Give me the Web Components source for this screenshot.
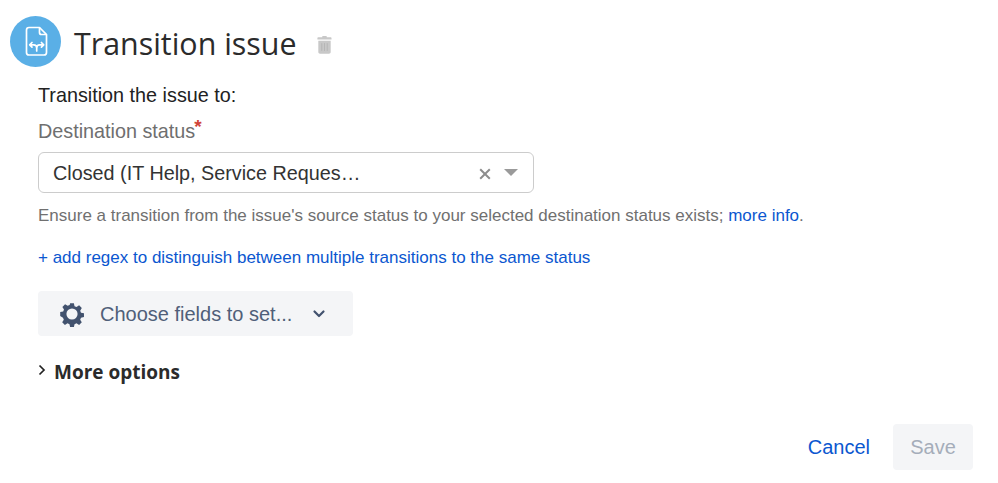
<!DOCTYPE html>
<html>
<head>
<meta charset="utf-8">
<title>Transition issue</title>
<style>
  html, body { margin: 0; background: #fff; }
  body { font-family: "Liberation Sans", Arial, sans-serif; color: #172b4d; }
</style>
</head>
<body>
<transition-form></transition-form>

<template id="header-tpl">
  <style>
    :host { display: flex; align-items: center; height: 52px; }
    .avatar { width: 51px; height: 51px; flex-shrink: 0; align-self: flex-start; }
    h1 { margin: 3px 0 0 13px; font: 400 30.4px/44px "Open Sans", sans-serif; color: #2b2b2b; }
    .trash { margin: 5px 0 0 19px; width: 17px; height: 20px; }
  </style>
  <svg class="avatar" viewBox="0 0 51 51">
    <circle cx="25.5" cy="25.5" r="25.5" fill="#5aafe6"/>
    <path d="M19 11.500h10.500l7 7v18a2.500 2.500 0 0 1-2.500 2.500H19a2.500 2.500 0 0 1-2.500-2.500V14a2.500 2.500 0 0 1 2.500-2.500z" fill="none" stroke="#fff" stroke-width="1.7" stroke-linejoin="round"/>
    <path d="M29.500 11.500v5a2 2 0 0 0 2 2h5" fill="none" stroke="#fff" stroke-width="1.700"/>
    <path d="M26.700 35v-3c0-2-1.300-3.200-3-3.200h-3.600M26.700 32c0-2 1.300-3.200 3-3.200h3.600M22 26.500l-2.300 2.300 2.300 2.300M31.400 26.500l2.300 2.300-2.300 2.300" fill="none" stroke="#fff" stroke-width="1.700" stroke-linecap="round" stroke-linejoin="round"/>
  </svg>
  <h1><slot></slot></h1>
  <svg class="trash" viewBox="0 0 18 22">
    <path d="M6.5 2.5V1.6c0-.4.3-.6.6-.6h3.8c.3 0 .6.2.6.6v.9h4.3c.5 0 .9.4.9.9V5H1.2V3.4c0-.5.4-.9.9-.9z" fill="#c8c8c8"/>
    <path d="M2.2 6.2h13.6v12.4c0 1-.8 1.9-1.9 1.9H4.1c-1 0-1.9-.9-1.9-1.9z" fill="#c8c8c8"/>
    <path d="M6 9v8.5M9 9v8.5M12 9v8.5" stroke="#b4b4b4" stroke-width="1"/>
  </svg>
</template>

<template id="select-tpl">
  <style>
    :host { display: block; width: 496px; box-sizing: border-box; height: 41px; border: 1px solid #ccc; border-radius: 6px; background: #fff; }
    .row { display: flex; align-items: center; height: 100%; padding: 0 15px 0 14px; box-sizing: border-box; font-size: 19.8px; color: #333; }
    .value { flex: 1; min-width: 0; margin-top: 1px; }
    svg { display: block; }
    .clear { width: 12px; height: 12px; margin-top: 3px; }
    .caret { width: 14px; height: 7px; margin-left: 13px; margin-top: -1px; }
  </style>
  <div class="row">
    <span class="value"><slot></slot></span>
    <svg class="clear" viewBox="0 0 12 12"><path d="M1.2 1.2l9.6 9.6M10.8 1.2l-9.6 9.6" stroke="#8d8d8d" stroke-width="2"/></svg>
    <svg class="caret" viewBox="0 0 14 7"><path d="M0 0h14L7 7z" fill="#9a9a9a"/></svg>
  </div>
</template>

<template id="fields-tpl">
  <style>
    :host { display: inline-flex; align-items: center; width: 315px; height: 45px; box-sizing: border-box; padding-left: 21px; background: #f4f5f7; border-radius: 4px; font-size: 20px; color: #505f79; }
    .gear { width: 26px; height: 26px; }
    .label { margin: 1px 0 0 15px; }
    .chev { width: 14px; height: 9px; margin-left: 20px; }
  </style>
  <svg class="gear" viewBox="0 0 26 26">
    <path fill="#42526e" fill-rule="evenodd" d="M10.9 1h4.2l.7 3.3 2.2.9 2.9-1.8 3 3-1.8 2.9.9 2.2 3.3.7v4.2l-3.3.7-.9 2.2 1.8 2.9-3 3-2.9-1.8-2.2.9-.7 3.3h-4.2l-.7-3.3-2.2-.9-2.9 1.8-3-3 1.8-2.9-.9-2.2L-.1 15.1v-4.2l3.3-.7.9-2.2-1.8-2.9 3-3 2.9 1.8 2.2-.9zM13 6.8a6.2 6.2 0 1 0 0 12.4 6.2 6.2 0 0 0 0-12.4z" transform="translate(1.3 1.3) scale(.9)"/>
  </svg>
  <span class="label"><slot></slot></span>
  <svg class="chev" viewBox="0 0 14 9"><path d="M2.500 2.500l4.500 4.500 4.500-4.500" fill="none" stroke="#42526e" stroke-width="2.200" stroke-linecap="round" stroke-linejoin="round"/></svg>
</template>

<template id="more-tpl">
  <style>
    :host { display: flex; align-items: center; font: 700 19px/28px "Open Sans", sans-serif; color: #2b2b2b; }
    svg { width: 8px; height: 12px; margin-right: 8px; margin-top: -4px; }
  </style>
  <svg viewBox="0 0 8 12"><path d="M1.5 1.500L6 6l-4.500 4.500" fill="none" stroke="#222" stroke-width="1.7"/></svg>
  <slot></slot>
</template>

<template id="footer-tpl">
  <style>
    :host { display: flex; justify-content: flex-end; align-items: center; gap: 23px; }
    .cancel { font-size: 20px; color: #0b57d0; }
    .save { display: flex; align-items: center; justify-content: center; width: 80px; height: 46px; background: #f4f5f7; border-radius: 4px; font-size: 20px; color: #a5adba; }
  </style>
  <span class="cancel">Cancel</span>
  <span class="save">Save</span>
</template>

<template id="form-tpl">
  <style>
    :host { display: block; width: 998px; height: 483px; box-sizing: border-box; padding: 16px 25px 0 10px; }
    .body { margin-left: 28px; }
    a { color: #0b57d0; text-decoration: none; }
    .intro { margin-top: 15px; font-size: 19.8px; line-height: 24px; color: #222; }
    .label { margin-top: 12px; font-size: 19.8px; line-height: 24px; color: #6f6f6f; }
    .label sup { color: #d04437; font: 700 19px/0 "Liberation Sans", sans-serif; vertical-align: 5px; margin-left: -1px; }
    field-select { margin-top: 9px; }
    .help { margin-top: 12px; font-size: 17px; line-height: 21px; color: #707070; }
    .regex { margin-top: 21px; font-size: 17px; line-height: 21px; }
    fields-button { margin-top: 23px; }
    more-options { margin-top: 22px; }
    form-footer { margin-top: 38px; }
  </style>
  <issue-header>Transition issue</issue-header>
  <div class="body">
    <div class="intro">Transition the issue to:</div>
    <div class="label">Destination status<sup>*</sup></div>
    <field-select>Closed (IT Help, Service Reques…</field-select>
    <div class="help">Ensure a transition from the issue's source status to your selected destination status exists; <a>more info</a>.</div>
    <div class="regex"><a>+ add regex to distinguish between multiple transitions to the same status</a></div>
    <fields-button>Choose fields to set...</fields-button>
    <more-options>More options</more-options>
  </div>
  <form-footer></form-footer>
</template>

<script>
  function define(tag, tplId) {
    customElements.define(tag, class extends HTMLElement {
      constructor() {
        super();
        const shadow = this.attachShadow({ mode: "open" });
        shadow.appendChild(document.getElementById(tplId).content.cloneNode(true));
      }
    });
  }

  define("issue-header", "header-tpl");
  define("field-select", "select-tpl");
  define("fields-button", "fields-tpl");
  define("more-options", "more-tpl");
  define("form-footer", "footer-tpl");
  define("transition-form", "form-tpl");
</script>
</body>
</html>
